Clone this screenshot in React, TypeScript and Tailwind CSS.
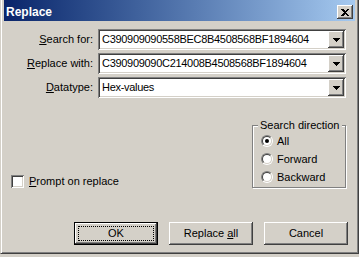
import type { ReactNode } from 'react'

const raised =
  'shadow-[inset_-1px_-1px_0_#404040,inset_1px_1px_0_#ffffff,inset_-2px_-2px_0_#808080,inset_2px_2px_0_#d4d0c8]'
const sunken =
  'shadow-[inset_1px_1px_0_#808080,inset_-1px_-1px_0_#ffffff,inset_2px_2px_0_#404040,inset_-2px_-2px_0_#d4d0c8]'

function Arrow() {
  return (
    <svg width="7" height="4" viewBox="0 0 7 4" shapeRendering="crispEdges">
      <rect x="0" y="0" width="7" height="1" fill="#000" />
      <rect x="1" y="1" width="5" height="1" fill="#000" />
      <rect x="2" y="2" width="3" height="1" fill="#000" />
      <rect x="3" y="3" width="1" height="1" fill="#000" />
    </svg>
  )
}

function Combo({ value }: { value: string }) {
  return (
    <div className={`flex h-[21px] w-[248px] bg-white p-[2px] ${sunken}`}>
      <div className="flex-1 pl-[2px] leading-[17px] tracking-[-0.3px] whitespace-nowrap overflow-hidden">
        {value}
      </div>
      <div className={`flex h-[17px] w-[16px] items-center justify-center bg-[#d4d0c8] ${raised}`}>
        <Arrow />
      </div>
    </div>
  )
}

function Row({ label, children }: { label: ReactNode; children: ReactNode }) {
  return (
    <div className="flex items-center gap-[5px]">
      <div className="w-[89px] text-right whitespace-nowrap">{label}</div>
      {children}
    </div>
  )
}

function Radio({ checked, label }: { checked?: boolean; label: string }) {
  return (
    <div className="flex h-[18px] items-center gap-[4px]">
      <div className="h-[12px] w-[12px] rounded-full border border-t-[#808080] border-l-[#808080] border-r-white border-b-white">
        <div className="flex h-full w-full items-center justify-center rounded-full border border-t-[#404040] border-l-[#404040] border-r-[#d4d0c8] border-b-[#d4d0c8] bg-white">
          {checked && <div className="h-[4px] w-[4px] rounded-full bg-black" />}
        </div>
      </div>
      <span>{label}</span>
    </div>
  )
}

function Button({ children, isDefault }: { children: ReactNode; isDefault?: boolean }) {
  if (isDefault) {
    return (
      <div className="h-[23px] w-[84px] border border-black">
        <div className={`flex h-full w-full items-center justify-center bg-[#d4d0c8] p-[3px] ${raised}`}>
          <div className="flex h-full w-full items-center justify-center border border-dotted border-black">
            {children}
          </div>
        </div>
      </div>
    )
  }
  return (
    <div className={`flex h-[23px] w-[84px] items-center justify-center bg-[#d4d0c8] ${raised}`}>
      {children}
    </div>
  )
}

export default function App() {
  return (
    <div className="h-[257px] w-[359px] overflow-hidden bg-[#d4d0c8] font-['Liberation_Sans',Arial,sans-serif] text-[11px] text-black">
      <div className="h-[254px] border-l border-l-[#d4d0c8] border-r border-r-[#404040] border-b border-b-[#404040] pl-[3px] pr-[3px] shadow-[inset_1px_0_0_#ffffff,inset_-1px_-1px_0_#808080]">
        {/* title bar */}
        <div className="flex h-[21px] items-start justify-between bg-gradient-to-r from-[#0a246a] to-[#a6caf0] pt-[3px]">
          <span className="pl-[2px] text-[12px] font-bold leading-[18px] text-white">Replace</span>
          <div className={`mr-[2px] mt-[2px] flex h-[14px] w-[16px] items-center justify-center bg-[#d4d0c8] ${raised}`}>
            <svg width="8" height="7" viewBox="0 0 8 7" shapeRendering="crispEdges">
              <path d="M0 0h2l2 2 2-2h2v1l-3 2.5 3 2.5v1h-2l-2-2-2 2h-2v-1l3-2.5-3-2.5z" fill="#000" />
            </svg>
          </div>
        </div>

        {/* fields */}
        <div className="mt-[8px] flex flex-col gap-[3px]">
          <Row label={<><span className="underline">S</span>earch for:</>}>
            <Combo value="C390909090558BEC8B4508568BF1894604" />
          </Row>
          <Row label={<><span className="underline">R</span>eplace with:</>}>
            <Combo value="C390909090C214008B4508568BF1894604" />
          </Row>
          <Row label={<><span className="underline">D</span>atatype:</>}>
            <Combo value="Hex-values" />
          </Row>
        </div>

        {/* options */}
        <div className="mt-[27px] flex items-end justify-between pl-[7px] pr-[9px]">
          <div className="flex h-[13px] items-center gap-[5px]">
            <div className={`h-[13px] w-[13px] bg-white ${sunken}`} />
            <span>
              <span className="underline">P</span>rompt on replace
            </span>
          </div>
          <div className="relative h-[63px] w-[94px] border border-[#808080] pl-[8px] pt-[6px] shadow-[inset_1px_1px_0_#ffffff,1px_1px_0_#ffffff]">
            <span className="absolute -top-[8px] left-[5px] bg-[#d4d0c8] px-[2px] leading-[14px]">Search direction</span>
            <Radio checked label="All" />
            <Radio label="Forward" />
            <Radio label="Backward" />
          </div>
        </div>

        {/* buttons */}
        <div className="mt-[34px] flex gap-[11px] pl-[70px]">
          <Button isDefault>OK</Button>
          <Button>
            <span>
              Replace <span className="underline">a</span>ll
            </span>
          </Button>
          <Button>Cancel</Button>
        </div>
      </div>
    </div>
  )
}
